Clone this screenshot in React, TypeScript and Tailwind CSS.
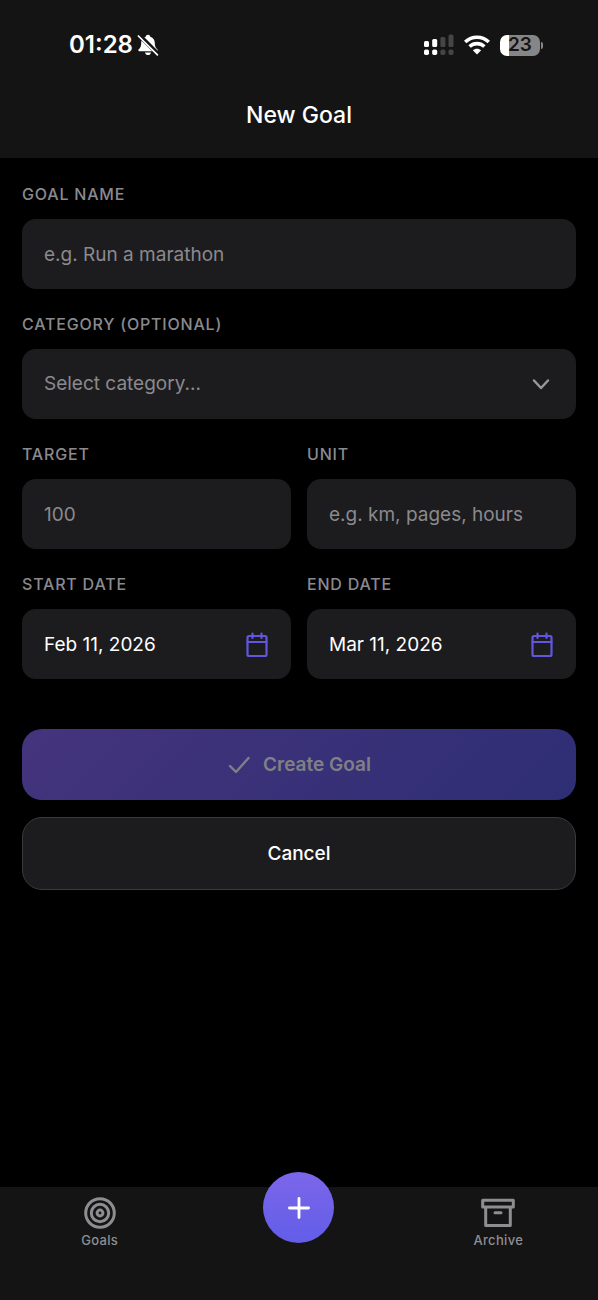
import { useState, type ReactNode } from "react";

const fieldClass =
  "block h-[70px] w-full rounded-[14px] bg-[#1c1c1e] px-[22px] text-[19px] outline-none placeholder:text-[#8a8a8e]";

function Field({ id, label, children }: { id: string; label: string; children: ReactNode }) {
  return (
    <div className="min-w-0">
      <label htmlFor={id} className="mb-[15px] block text-[16px] leading-5 font-medium tracking-wider text-[#8a8a8e] uppercase">
        {label}
      </label>
      {children}
    </div>
  );
}

function DateField({ id, label, value, onChange }: { id: string; label: string; value: string; onChange: (v: string) => void }) {
  return (
    <Field id={id} label={label}>
      <div className="relative">
        <input id={id} type="text" className={fieldClass} value={value} onChange={e => onChange(e.target.value)} />
        <svg className="pointer-events-none absolute top-[23px] right-[22px] h-[26px] w-6" viewBox="0 0 24 26" fill="none" stroke="#6257dc" strokeWidth="2.2" strokeLinecap="round" strokeLinejoin="round" aria-hidden="true">
          <rect x="2.5" y="4" width="19" height="20" rx="1.5" />
          <path d="M2.5 10h19M7.5 1.500v4.500M16.500 1.500v4.500" />
        </svg>
      </div>
    </Field>
  );
}

function StatusBar() {
  return (
    <div className="flex h-[90px] items-center justify-between pr-[55px] pl-[69px]">
      <div className="flex items-center gap-1">
        <span className="text-[24px] leading-7 font-semibold">01:28</span>
        <svg className="h-[22px] w-[22px]" viewBox="0 0 22 22" aria-label="Silent">
          <path d="M11 .8c-1.300 0-2.100.8-2.300 1.900C5.600 3.800 4.200 6 4.200 9c0 3.300-.8 4.800-2.500 6.300-.8.8-.4 1.900.7 1.900h17.200c1.100 0 1.500-1.100.7-1.900C18.600 13.800 17.800 12.300 17.800 9c0-3-1.400-5.200-4.500-6.300C13.100 1.600 12.300.8 11 .8ZM8 18.500h6c-.3 1.600-1.500 2.600-3 2.600s-2.700-1-3-2.600Z" fill="#fff" />
          <path d="M2 1 21 20" stroke="#141414" strokeWidth="4.400" />
          <path d="M1.400 2 20.400 20.800" stroke="#fff" strokeWidth="1.700" strokeLinecap="round" />
        </svg>
      </div>
      <div className="flex items-center gap-[10px]">
        <svg className="h-[22px] w-[31px]" viewBox="0 0 31 22" aria-label="Signal">
          <g fill="#fff">
            <rect x="1" y="7" width="5" height="6" rx="1.500" />
            <rect x="9.200" y="5" width="5" height="8" rx="1.500" />
            <rect x="1" y="15.500" width="5" height="5.500" rx="1.700" />
            <rect x="9.200" y="15.500" width="5" height="5.500" rx="1.700" />
          </g>
          <g fill="#454545">
            <rect x="17.400" y="3" width="5" height="10" rx="1.500" />
            <rect x="25.500" y="0.500" width="5" height="12.500" rx="1.500" />
            <rect x="17.400" y="15.500" width="5" height="5.500" rx="1.700" />
            <rect x="25.500" y="15.500" width="5" height="5.500" rx="1.700" />
          </g>
        </svg>
        <svg className="h-5 w-[26px]" viewBox="0 0 26 20" fill="none" stroke="#fff" strokeWidth="3.600" aria-label="Wi-Fi">
          <path d="M1.200 7C7.900.700 18.100.700 24.800 7" />
          <path d="M5.600 11.500c4.300-3.900 10.500-3.900 14.800 0" />
          <path d="M13 19.500l-4.200-4.200c2.400-2.100 6-2.100 8.400 0Z" fill="#fff" stroke="none" />
        </svg>
        <div className="flex items-center gap-px">
          <div className="flex h-[21px] w-10 items-center justify-center rounded-[7px] bg-linear-to-r from-white from-23% to-[#868686] to-23%">
            <span className="text-[19px] leading-5 font-semibold text-[#141414]">23</span>
          </div>
          <div className="h-[7px] w-[2px] rounded-r-full bg-[#868686]" />
        </div>
      </div>
    </div>
  );
}

export default function App() {
  const [name, setName] = useState("");
  const [category, setCategory] = useState("");
  const [target, setTarget] = useState("");
  const [unit, setUnit] = useState("");
  const [startDate, setStartDate] = useState("Feb 11, 2026");
  const [endDate, setEndDate] = useState("Mar 11, 2026");

  return (
    <div className="flex min-h-screen flex-col bg-black font-['Inter',sans-serif] text-white">
      <header className="h-[158px] bg-[#141414]">
        <StatusBar />
        <h1 className="py-[10px] text-center text-[23px] leading-[30px] font-medium">New Goal</h1>
      </header>

      <main className="flex-1 px-[22px] pt-[26px] pb-8">
        <form onSubmit={e => e.preventDefault()}>
          <div className="space-y-[25px]">
            <Field id="name" label="Goal Name">
              <input id="name" className={fieldClass} placeholder="e.g. Run a marathon" value={name} onChange={e => setName(e.target.value)} />
            </Field>

            <Field id="category" label="Category (optional)">
              <div className="relative">
                <select
                  id="category"
                  className="block h-[70px] w-full appearance-none rounded-[14px] bg-[#1c1c1e] px-[22px] text-[19px] text-[#8a8a8e] outline-none"
                  value={category}
                  onChange={e => setCategory(e.target.value)}
                >
                  <option value="">Select category...</option>
                </select>
                <svg className="pointer-events-none absolute top-[23px] right-[23px] h-6 w-6" viewBox="0 0 24 24" fill="none" stroke="#98989c" strokeWidth="2.500" strokeLinecap="round" strokeLinejoin="round" aria-hidden="true">
                  <path d="m5 8.500 7 7.500 7-7.500" />
                </svg>
              </div>
            </Field>

            <div className="grid grid-cols-2 gap-4">
              <Field id="target" label="Target">
                <input id="target" inputMode="numeric" className={fieldClass} placeholder="100" value={target} onChange={e => setTarget(e.target.value)} />
              </Field>
              <Field id="unit" label="Unit">
                <input id="unit" className={fieldClass} placeholder="e.g. km, pages, hours" value={unit} onChange={e => setUnit(e.target.value)} />
              </Field>
            </div>

            <div className="grid grid-cols-2 gap-4">
              <DateField id="start" label="Start Date" value={startDate} onChange={setStartDate} />
              <DateField id="end" label="End Date" value={endDate} onChange={setEndDate} />
            </div>
          </div>

          <button type="submit" disabled={!name} className="mt-[50px] flex h-[71px] w-full items-center justify-center gap-3 rounded-[20px] bg-linear-[135deg] from-[#44347d] to-[#2e2e74] pt-0.5 text-[19px] font-semibold text-[#808084]">
            <svg className="h-6 w-6" viewBox="0 0 24 24" fill="none" stroke="currentColor" strokeWidth="2.400" strokeLinecap="round" strokeLinejoin="round" aria-hidden="true">
              <path d="m3 12 6 6L21.500 4" />
            </svg>
            Create Goal
          </button>
          <button type="button" className="mt-[17px] h-[73px] w-full rounded-[20px] border border-[#3a3a3c] bg-[#1c1c1e] pt-0.5 text-[19px] font-medium">
            Cancel
          </button>
        </form>
      </main>

      <nav className="grid h-[113px] grid-cols-3 justify-items-center bg-[#141414] text-[13px] leading-4 font-medium tracking-wide text-[#8e8e92]">
        <a href="#goals" className="flex flex-col items-center gap-[3px] pt-[10px]">
          <svg className="h-8 w-8" viewBox="0 0 32 32" fill="none" stroke="currentColor" strokeWidth="3" aria-hidden="true">
            <circle cx="16" cy="16" r="14.300" />
            <circle cx="16" cy="16" r="8.700" />
            <circle cx="16" cy="16" r="2.900" />
          </svg>
          Goals
        </a>
        <button aria-label="New goal" className="-mt-[15px] flex h-[71px] w-[71px] items-center justify-center rounded-full bg-linear-to-b from-[#7c66ea] to-[#625de8]">
          <svg className="h-6 w-6" viewBox="0 0 24 24" stroke="#fff" strokeWidth="2.800" strokeLinecap="round" aria-hidden="true">
            <path d="M12 2.400v19.200M2.400 12h19.200" />
          </svg>
        </button>
        <a href="#archive" className="flex flex-col items-center gap-[3px] pt-[10px]">
          <svg className="h-8 w-[34px]" viewBox="0 0 34 32" fill="none" stroke="currentColor" strokeWidth="3" strokeLinejoin="round" strokeLinecap="round" aria-hidden="true">
            <path d="M1.700 3.300h30.600v6.800H1.700zM4.700 10.100h24.600v18.400H4.700zM14 15.800h6" />
          </svg>
          Archive
        </a>
      </nav>
    </div>
  );
}
